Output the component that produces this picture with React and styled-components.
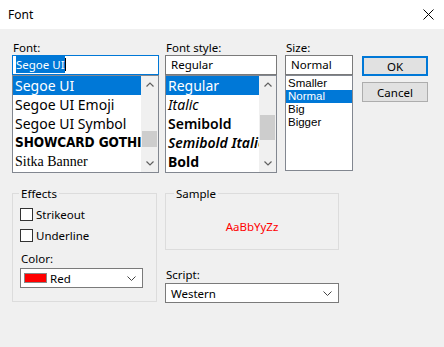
import React from 'react';
import styled, { createGlobalStyle } from 'styled-components';

const GlobalStyle = createGlobalStyle`
  html, body {
    margin: 0;
    padding: 0;
    background: #f0f0f0;
  }
  body {
    font-family: "Noto Sans", "Open Sans", sans-serif;
    color: #000;
  }
`;

const Window = styled.div`
  width: 444px;
  height: 347px;
  background: #f0f0f0;
  display: flex;
  flex-direction: column;
  overflow: hidden;
`;

const TitleBar = styled.div`
  height: 29px;
  background: #fff;
  display: flex;
  align-items: center;
  justify-content: space-between;
  padding: 0 10px 0 8px;
  font-size: 12px;
`;

const Content = styled.div`
  padding: 11px 0 0 12px;
  display: flex;
  flex-direction: column;
`;

const TopRow = styled.div`
  display: flex;
  align-items: flex-start;
`;

const Column = styled.div`
  display: flex;
  flex-direction: column;
  width: ${(p) => p.$width}px;
  margin-left: ${(p) => p.$offset || 0}px;
`;

const Label = styled.div`
  font-size: 11.5px;
  line-height: 15px;
  height: 15px;
  margin-left: 1px;
  margin-top: ${(p) => p.$top || 0}px;
`;

const TextBox = styled.div`
  box-sizing: border-box;
  height: 20px;
  border: 1px solid ${(p) => (p.$focused ? '#0078d7' : '#7a7a7a')};
  background: #fff;
  font-size: 11.5px;
  line-height: 18px;
  padding-left: ${(p) => p.$pad || 5}px;
  white-space: nowrap;
`;

const Selected = styled.span`
  background: #0078d7;
  color: #fff;
  padding: 1px 0;
`;

const Caret = styled.span`
  display: inline-block;
  width: 1px;
  height: 13px;
  background: #000;
  vertical-align: -2px;
`;

const ListBox = styled.div`
  box-sizing: border-box;
  height: ${(p) => p.$height}px;
  border: 1px solid #828790;
  background: #fff;
  display: flex;
  overflow: hidden;
`;

const Items = styled.div`
  flex: 1;
  overflow: hidden;
  padding-top: ${(p) => p.$pad || 0}px;
`;

const Item = styled.div`
  height: ${(p) => p.$h || 19}px;
  line-height: ${(p) => p.$h || 19}px;
  font-size: ${(p) => p.$size || 14}px;
  font-family: ${(p) => p.$family || 'inherit'};
  font-weight: ${(p) => p.$weight || 400};
  font-style: ${(p) => (p.$italic ? 'italic' : 'normal')};
  letter-spacing: ${(p) => p.$spacing || 0}px;
  white-space: nowrap;
  padding-left: 2px;
  background: ${(p) => (p.$selected ? '#0078d7' : 'transparent')};
  color: ${(p) => (p.$selected ? '#fff' : '#000')};
`;

const ScrollBar = styled.div`
  width: 17px;
  background: #f0f0f0;
  display: flex;
  flex-direction: column;
`;

const Arrow = styled.div`
  height: 17px;
  display: flex;
  align-items: center;
  justify-content: center;
`;

const Track = styled.div`
  flex: 1;
  display: flex;
  flex-direction: column;
`;

const Thumb = styled.div`
  height: ${(p) => p.$height}px;
  margin: ${(p) => p.$top}px 1px 0;
  background: #cdcdcd;
`;

const Button = styled.div`
  box-sizing: border-box;
  height: 20px;
  margin-top: ${(p) => p.$top || 0}px;
  border: ${(p) => (p.$default ? '2px solid #0078d7' : '1px solid #adadad')};
  background: #e1e1e1;
  display: flex;
  align-items: center;
  justify-content: center;
  font-size: 11.5px;
`;

const BottomRow = styled.div`
  display: flex;
  align-items: flex-start;
  margin-top: 13px;
`;

const Group = styled.fieldset`
  box-sizing: border-box;
  margin: 0;
  width: ${(p) => p.$width}px;
  height: ${(p) => p.$height}px;
  border: 1px solid #dcdcdc;
  padding: ${(p) => p.$pad || '0 0 0 7px'};
  min-width: 0;
  display: flex;
  flex-direction: column;
`;

const Legend = styled.legend`
  font-size: 11.5px;
  line-height: 15px;
  padding: 0 2px;
  margin-left: -1px;
`;

const CheckRow = styled.div`
  display: flex;
  align-items: center;
  height: 13px;
  margin-top: ${(p) => p.$top}px;
  font-size: 11.5px;
`;

const Box = styled.div`
  box-sizing: border-box;
  width: 13px;
  height: 13px;
  border: 1px solid #333;
  background: #fff;
  margin-right: 3px;
`;

const Combo = styled.div`
  box-sizing: border-box;
  width: ${(p) => p.$width}px;
  height: 20px;
  margin-top: ${(p) => p.$top || 0}px;
  border: 1px solid #7a7a7a;
  background: #fff;
  display: flex;
  align-items: center;
  padding: 0 6px 0 3px;
  font-size: 11.5px;
`;

const ComboText = styled.span`
  flex: 1;
  padding-left: ${(p) => p.$pad || 0}px;
`;

const Swatch = styled.span`
  width: 23px;
  height: 10px;
  background: #ff0000;
  border: 1px solid #888;
  box-sizing: border-box;
  margin-right: 3px;
`;

const SampleText = styled.div`
  height: 50px;
  display: flex;
  align-items: center;
  justify-content: center;
  color: #ff0000;
  font-size: 11.5px;
  margin-left: -9px;
`;

const Chevron = ({ up }) => (
  <svg width="8" height="5" viewBox="0 0 8 5">
    <polyline
      points={up ? '0.5,4.5 4,1 7.5,4.5' : '0.5,0.5 4,4 7.5,0.5'}
      fill="none"
      stroke="#606060"
      strokeWidth="1.2"
    />
  </svg>
);

const ComboChevron = () => (
  <svg width="9" height="5" viewBox="0 0 9 5">
    <polyline points="0.5,0.5 4.5,4.5 8.5,0.5" fill="none" stroke="#444" strokeWidth="1" />
  </svg>
);

const CloseIcon = () => (
  <svg width="11" height="11" viewBox="0 0 11 11">
    <path d="M0.5 0.5 L10.5 10.5 M10.5 0.5 L0.5 10.5" stroke="#000" strokeWidth="1" />
  </svg>
);

const Scroll = ({ thumbTop, thumbHeight }) => (
  <ScrollBar>
    <Arrow>
      <Chevron up />
    </Arrow>
    <Track>
      <Thumb $top={thumbTop} $height={thumbHeight} />
    </Track>
    <Arrow>
      <Chevron />
    </Arrow>
  </ScrollBar>
);

export default function App() {
  const fonts = [
    { name: 'Segoe UI', selected: true },
    { name: 'Segoe UI Emoji' },
    { name: 'Segoe UI Symbol' },
    {
      name: 'SHOWCARD GOTHIC',
      family: '"DejaVu Sans Condensed", "DejaVu Sans", sans-serif',
      weight: 900,
      size: 13.5,
      spacing: -0.1,
    },
    { name: 'Sitka Banner', family: '"Liberation Serif", serif', size: 14 },
  ];
  const styles = [
    { name: 'Regular', selected: true },
    { name: 'Italic', italic: true },
    { name: 'Semibold', weight: 600 },
    { name: 'Semibold Italic', weight: 600, italic: true },
    { name: 'Bold', weight: 700 },
  ];
  const sizes = ['Smaller', 'Normal', 'Big', 'Bigger'];

  return (
    <Window>
      <GlobalStyle />
      <TitleBar>
        <span>Font</span>
        <CloseIcon />
      </TitleBar>
      <Content>
        <TopRow>
          <Column $width={147}>
            <Label>Font:</Label>
            <TextBox $focused $pad={3}>
              <Selected>Segoe UI</Selected>
              <Caret />
            </TextBox>
            <ListBox $height={98}>
              <Items>
                {fonts.map((f) => (
                  <Item
                    key={f.name}
                    $selected={f.selected}
                    $family={f.family}
                    $weight={f.weight}
                    $size={f.size}
                    $spacing={f.spacing}
                  >
                    {f.name}
                  </Item>
                ))}
              </Items>
              <Scroll thumbTop={38} thumbHeight={16} />
            </ListBox>
          </Column>

          <Column $width={112} $offset={6}>
            <Label>Font style:</Label>
            <TextBox $pad={5}>Regular</TextBox>
            <ListBox $height={98}>
              <Items>
                {styles.map((s) => (
                  <Item
                    key={s.name}
                    $selected={s.selected}
                    $weight={s.weight}
                    $italic={s.italic}
                  >
                    {s.name}
                  </Item>
                ))}
              </Items>
              <Scroll thumbTop={22} thumbHeight={25} />
            </ListBox>
          </Column>

          <Column $width={68} $offset={8}>
            <Label>Size:</Label>
            <TextBox $pad={5}>Normal</TextBox>
            <ListBox $height={96}>
              <Items $pad={1}>
                {sizes.map((s) => (
                  <Item
                    key={s}
                    $h={13}
                    $size={11.5}
                    $family={'"Liberation Sans", Arial, sans-serif'}
                    $selected={s === 'Normal'}
                  >
                    {s}
                  </Item>
                ))}
              </Items>
            </ListBox>
          </Column>

          <Column $width={66} $offset={9}>
            <Button $default $top={16}>OK</Button>
            <Button $top={6}>Cancel</Button>
          </Column>
        </TopRow>

        <BottomRow>
          <Group $width={145} $height={116}>
            <Legend>Effects</Legend>
            <CheckRow $top={7}>
              <Box />
              Strikeout
            </CheckRow>
            <CheckRow $top={8}>
              <Box />
              Underline
            </CheckRow>
            <Label $top={9}>Color:</Label>
            <Combo $width={123} $top={2}>
              <Swatch />
              <ComboText>Red</ComboText>
              <ComboChevron />
            </Combo>
          </Group>

          <Column $width={174} $offset={8}>
            <Group $width={174} $height={64} $pad="0 0 0 9px">
              <Legend>Sample</Legend>
              <SampleText>AaBbYyZz</SampleText>
            </Group>
            <Label $top={17}>Script:</Label>
            <Combo $width={174} $top={1}>
              <ComboText $pad={2}>Western</ComboText>
              <ComboChevron />
            </Combo>
          </Column>
        </BottomRow>
      </Content>
    </Window>
  );
}
